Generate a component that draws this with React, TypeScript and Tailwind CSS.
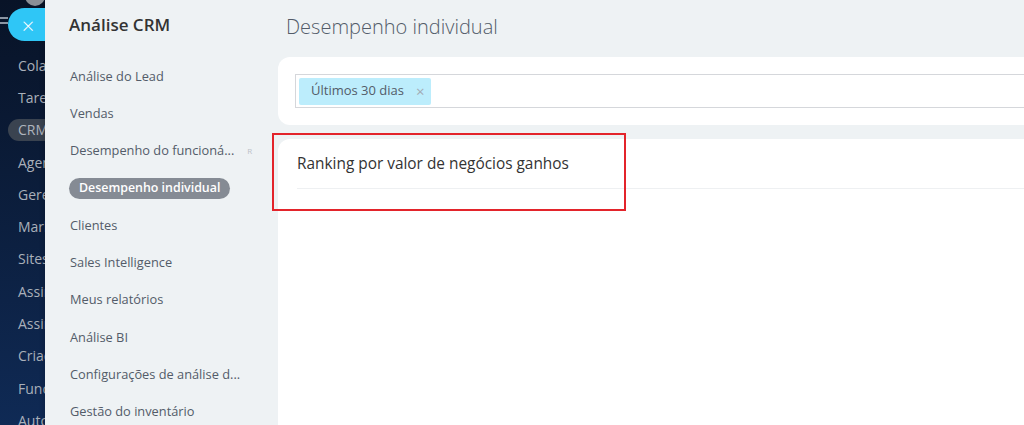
const darkItems = [
  "Colaboração",
  "Tarefas e Projetos",
  "CRM",
  "Agenda",
  "Gerenciamento",
  "Marketing",
  "Sites e Lojas",
  "Assinatura eletrônica",
  "Assinatura",
  "Criação de conteúdo",
  "Funcionários",
  "Automação",
];

const menuItems = [
  "Análise do Lead",
  "Vendas",
  "Desempenho do funcioná...",
  "Desempenho individual",
  "Clientes",
  "Sales Intelligence",
  "Meus relatórios",
  "Análise BI",
  "Configurações de análise d...",
  "Gestão do inventário",
];

export default function App() {
  return (
    <div className="relative flex h-[425px] w-[1024px] overflow-hidden font-['Open_Sans',sans-serif]">
      {/* dark portal sidebar */}
      <aside className="flex w-[45px] shrink-0 flex-col overflow-hidden bg-gradient-to-b from-[#081327] to-[#0f2a55] pt-[49px]">
        {darkItems.map((item) => (
          <div key={item} className="flex h-[32.3px] shrink-0 items-center overflow-hidden">
            {item === "CRM" ? (
              <span className="ml-[8px] flex h-[22px] items-center whitespace-nowrap rounded-l-full bg-[#3a4350] pl-[10px] pr-4 text-[14px] text-[#aeb4bd]">
                {item}
              </span>
            ) : (
              <span className="ml-[18px] whitespace-nowrap text-[14px] text-[#a9b0ba]">{item}</span>
            )}
          </div>
        ))}
      </aside>

      {/* slider panel */}
      <div className="flex flex-1 bg-[#eef2f4] shadow-[-2px_0_4px_rgba(0,0,0,0.15)]">
        <nav className="flex w-[233px] shrink-0 flex-col pl-[24px] pt-[11px]">
          <h1 className="h-[27px] text-[17px] font-semibold leading-[27px] text-[#333]">Análise CRM</h1>
          <ul className="mt-[19.5px] flex flex-col">
            {menuItems.map((item) => (
              <li key={item} className="flex h-[37.3px] items-center text-[12.8px] text-[#535c69]">
                {item === "Desempenho individual" ? (
                  <span className="flex h-[21px] items-center rounded-full bg-[#858b94] px-[10px] text-[12.4px] font-semibold text-white">
                    {item}
                  </span>
                ) : (
                  <span className="ml-[1px] flex items-center">
                    {item}
                    {item.startsWith("Desempenho do") && (
                      <span className="ml-[13px] text-[8px] text-[#bcc1c7]">R</span>
                    )}
                  </span>
                )}
              </li>
            ))}
          </ul>
        </nav>

        <main className="flex flex-1 flex-col">
          <div className="flex h-[57px] items-center pl-[8px] pb-[4px]">
            <h2 className="text-[20px] font-light text-[#535c69]">Desempenho individual</h2>
          </div>

          <section className="flex h-[68px] items-center rounded-l-[12px] bg-white pl-[17px]">
            <div className="flex h-[34px] flex-1 items-center border border-r-0 border-[#d5d7db] pl-[3px]">
              <span className="flex h-[27px] items-center gap-[12px] rounded-[2px] bg-[#bcedfc] pl-[12px] pr-[6px] text-[13px] text-[#535c69]">
                Últimos 30 dias
                <span className="text-[15px] leading-none text-[#a3abb4]">×</span>
              </span>
            </div>
          </section>

          <section className="mt-[14px] flex-1 rounded-tl-[12px] bg-white pl-[19px]">
            <div className="flex h-[50px] items-center border-b border-[#eef0f2] pt-[1px]">
              <h3 className="text-[15.4px] text-[#333]">Ranking por valor de negócios ganhos</h3>
            </div>
          </section>
        </main>
      </div>

      {/* close button */}
      <div className="absolute left-0 top-[17px] flex flex-col gap-[3px]">
        <span className="block h-[2px] w-[8px] bg-[#8b95a3]" />
        <span className="block h-[2px] w-[8px] bg-[#8b95a3]" />
      </div>
      <div className="absolute left-[25px] top-[-14px] h-[20px] w-[20px] rounded-full bg-[#8a8f96]" />
      <button className="absolute left-[8px] top-[8px] flex h-[33px] w-[37px] items-center justify-center rounded-l-full bg-[#2fc6f6] pl-[3px] text-[22px] font-light leading-none text-white">
        ×
      </button>

      {/* annotation */}
      <div className="pointer-events-none absolute left-[272px] top-[133px] h-[78px] w-[354px] border-2 border-[#e3242b]" />
    </div>
  );
}
